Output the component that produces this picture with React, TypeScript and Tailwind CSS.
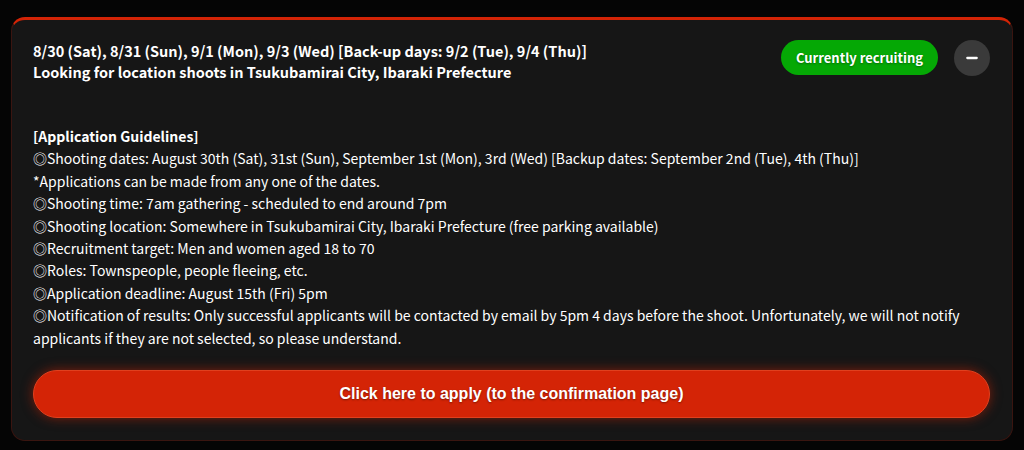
import { Minus } from 'lucide-react'

const lines = [
  '◎Shooting dates: August 30th (Sat), 31st (Sun), September 1st (Mon), 3rd (Wed) [Backup dates: September 2nd (Tue), 4th (Thu)]',
  '*Applications can be made from any one of the dates.',
  '◎Shooting time: 7am gathering - scheduled to end around 7pm',
  '◎Shooting location: Somewhere in Tsukubamirai City, Ibaraki Prefecture (free parking available)',
  '◎Recruitment target: Men and women aged 18 to 70',
  '◎Roles: Townspeople, people fleeing, etc.',
  '◎Application deadline: August 15th (Fri) 5pm',
  '◎Notification of results: Only successful applicants will be contacted by email by 5pm 4 days before the shoot. Unfortunately, we will not notify applicants if they are not selected, so please understand.',
]

export default function App() {
  return (
    <div
      className="min-h-[450px] bg-[#050505] px-[11px] pt-[17px] pb-[10px] text-white"
      style={{ fontFamily: '"Noto Sans CJK JP", "Noto Sans", sans-serif' }}
    >
      <article className="rounded-[14px] border border-[#3a1510] border-t-[3px] border-t-[#d42406] bg-[#161616] pl-[21px] pr-[22px] pt-[20px] pb-[22px]">
        <header className="flex items-start gap-4">
          <h2 className="min-w-0 flex-1 text-[14.5px] font-bold leading-[21px]">
            8/30 (Sat), 8/31 (Sun), 9/1 (Mon), 9/3 (Wed) [Back-up days: 9/2 (Tue), 9/4 (Thu)]
            <br />
            Looking for location shoots in Tsukubamirai City, Ibaraki Prefecture
          </h2>
          <span className="flex h-[35px] items-center rounded-full bg-[#05a805] px-[15px] text-[13px] font-bold [text-shadow:0_1px_2px_rgba(0,0,0,0.35)]">
            Currently recruiting
          </span>
          <button className="flex size-[36px] items-center justify-center rounded-full bg-[#3a3a3a]">
            <Minus className="size-[16px]" strokeWidth={3.5} aria-hidden />
          </button>
        </header>

        <div className="mt-[43px] text-[14px] leading-[22.4px]">
          <p className="font-bold">[Application Guidelines]</p>
          {lines.map((line) => (
            <p key={line}>{line}</p>
          ))}
        </div>

        <button
          className="mt-[21px] flex h-[48px] w-full items-center justify-center rounded-full border border-[#e0401e] bg-[#d42406] text-[16px] font-bold shadow-[0_0_12px_rgba(212,36,6,0.55)] [text-shadow:0_1px_2px_rgba(0,0,0,0.4)]"
          style={{ fontFamily: '"Liberation Sans", Arial, sans-serif' }}
        >
          Click here to apply (to the confirmation page)
        </button>
      </article>
    </div>
  )
}
